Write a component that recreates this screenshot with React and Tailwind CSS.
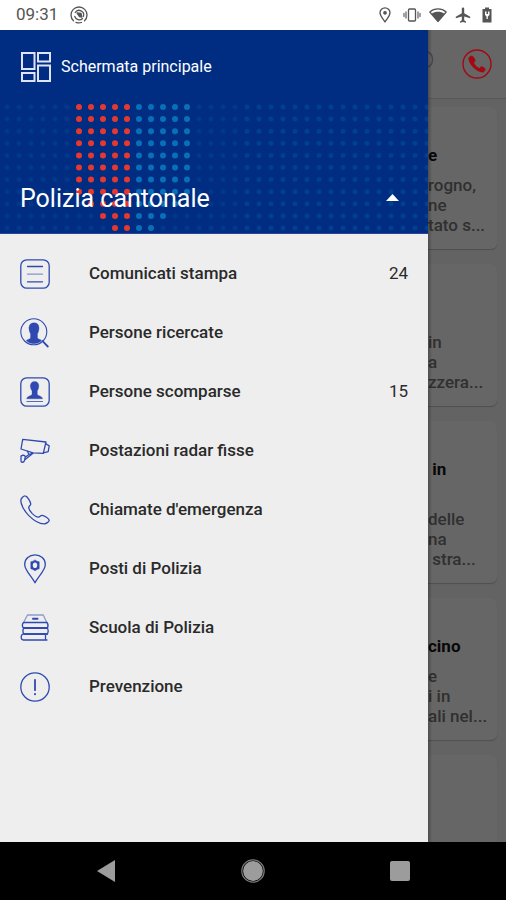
import React from "react";

const stroke = {
  fill: "none",
  stroke: "currentColor",
  strokeWidth: 1.3,
  strokeLinecap: "round",
  strokeLinejoin: "round",
};

function MenuIcon({ children }) {
  return (
    <svg viewBox="0 0 30 30" className="size-[30px] shrink-0 text-[#2f49b0]" aria-hidden="true" {...stroke}>
      {children}
    </svg>
  );
}

const items = [
  {
    label: "Comunicati stampa",
    count: 24,
    icon: (
      <>
        <rect x="0.8" y="0.8" width="28.4" height="28.4" rx="6" />
        <path d="M7.5 7.5h15M7.5 22.8h15" />
        <path d="M7.5 15.2h15" opacity="0.55" />
      </>
    ),
  },
  {
    label: "Persone ricercate",
    icon: (
      <>
        <circle cx="13.8" cy="13.8" r="13" strokeWidth="1.1" />
        <path
          d="M9 9.800C9 6.500 11 4.800 14 4.800s5 1.700 5 5c0 2.600-.6 4.500-1.500 5.900v4.300c.6 1 3 1.300 4.200 2.400-4.500 4.300-11.300 4.300-15.400 0 1.200-1.100 3.600-1.400 4.200-2.400v-4.300C9.600 14.300 9 12.400 9 9.800z"
          fill="currentColor"
          strokeWidth="0.3"
        />
        <path d="M22.600 23.200l5.200 5.300" strokeWidth="1.800" />
      </>
    ),
  },
  {
    label: "Persone scomparse",
    count: 15,
    icon: (
      <>
        <rect x="0.8" y="0.8" width="28.4" height="28.4" rx="6" />
        <path
          d="M10.400 8.800C10.400 6 12 4.400 14.600 4.400s4.200 1.600 4.200 4.400c0 2-.5 3.600-1.500 5v3.600c1.200 1.600 5 1.600 5.400 4.400H6.600c.4-2.800 4.200-2.800 5.400-4.400v-3.600c-1.100-1.400-1.600-3-1.600-5z"
          fill="currentColor"
          strokeWidth="0.300"
        />
        <path d="M7 24.500h15.500" strokeWidth="1.200" opacity="0.800" />
      </>
    ),
  },
  {
    label: "Postazioni radar fisse",
    icon: (
      <>
        <path d="M2.700 3.300L26 6 23.300 17.400 13 16.800 1 13z" />
        <path d="M25.500 7.500l3.700 2.400-1 5.800-4.700 1.200" />
        <path d="M7.500 15.500l1.500 3 4-1.300M9 18.500L5.500 21M13 17.300l-7.500 6" />
        <path d="M1 20c2.500-1.500 4.500-.5 4.200 1.500l-.8 3.200c-.7 2-3.200 2-3.400.4z" />
      </>
    ),
  },
  {
    label: "Chiamate d'emergenza",
    icon: (
      <path d="M5.300.9C3.700.6.900 3.500.8 5.400c-.1 3.500 3 10.200 8 15.200 5 4.900 11.500 8.400 15.400 8.300 2 0 4.800-2.200 5-3.600.2-1.300-5.200-5-7.200-4.900-1.500.1-2.200 1.600-3.400 1.700-1.700.1-4.300-1.500-6.300-3.500-2.100-2.200-3.700-4.800-3.500-6.400.1-1.100 1.800-1.800 1.900-3C10.900 7.200 7.300 1.200 5.300.9z" />
    ),
  },
  {
    label: "Posti di Polizia",
    icon: (
      <>
        <path d="M15 28.800C11.800 22.500 4.700 16.500 4.700 10.500 4.700 4.900 9.300.9 15 .9s10.300 4 10.300 9.600c0 6-7.100 12-10.300 18.300z" />
        <path d="M15 6l2 1.300 2.200.5v6.900l-2 .7-2.200 1.300-2.200-1.300-2-.7V7.800l2.200-.5z" fill="currentColor" strokeWidth="0.500" />
        <ellipse cx="15" cy="11.300" rx="2.200" ry="2.800" fill="#eeeeee" stroke="none" />
      </>
    ),
  },
  {
    label: "Scuola di Polizia",
    icon: (
      <>
        <path d="M3.800 9L7.500 2h15.800L26.500 9" opacity="0.500" />
        <path d="M13 5.700h4.500" strokeWidth="2" />
        <path d="M27 9.500H4.200c-2.400 0-2.400 5.500 0 5.500h23.300c.8-1.800.8-3.700-.5-5.500z" />
        <path d="M27.500 15H4.800c-2.500 0-2.500 6 0 6h22.700c1-2 1-4 0-6z" />
        <path d="M26 21.200H3.300c-2.800 0-2.800 5.800 0 5.800H27M25.500 21.200V27" />
        <path d="M5 14.800h22M5 21h22" strokeWidth="1.700" />
      </>
    ),
  },
  {
    label: "Prevenzione",
    icon: (
      <>
        <circle cx="15" cy="15" r="14.2" />
        <path d="M15 7.800v10.400" strokeWidth="1.800" />
        <path d="M15 21.900v.3" strokeWidth="2" />
      </>
    ),
  },
];

const cards = [
  { title: ["e"], lines: ["rogno,", "ne", "tato s..."] },
  { title: ["\u00a0"], lines: ["in", "a", "zzera..."] },
  { title: ["\u00a0in", "\u00a0"], lines: ["delle", "na", "\u00a0stra..."] },
  { title: ["cino"], lines: ["e", "i in", "ali nel..."] },
  { title: ["\u00a0"], lines: ["\u00a0", "\u00a0", "\u00a0"] },
];

function dotColor(col, row) {
  const inset = Math.max(0, row - 7);
  if (col >= 6 + inset && col <= 10) return "#e5382f";
  if (col >= 11 && col <= 15 - inset) return "#0870b8";
  return "#005099";
}

function DotField() {
  const dots = [];
  for (let row = 0; row < 11; row++) {
    for (let col = 0; col < 60; col++) {
      const fill = dotColor(col, row);
      const faint = fill === "#005099";
      dots.push(
        <circle
          key={`${row}-${col}`}
          cx={7 + col * 12}
          cy={5 + row * 12.1}
          r={faint ? 2.5 : 3}
          fill={fill}
          opacity={faint ? (col < 20 ? 0.35 : 0.55) : 1}
        />
      );
    }
  }
  return (
    <svg className="absolute bottom-0 left-0 h-[131px] w-full" aria-hidden="true">
      {dots}
    </svg>
  );
}

function StatusBar() {
  return (
    <header className="flex h-[30px] shrink-0 items-center justify-between bg-white pr-[13px] pl-4 text-[#555555]">
      <div className="flex items-center gap-3">
        <time className="text-[17px]">09:31</time>
        <svg viewBox="0 0 18 18" className="size-[18px]" aria-hidden="true" {...stroke}>
          <path d="M3.5 14.8A8 8 0 1 1 14.5 14.8M6 16.4a8 8 0 0 0 5.5.1" />
          <path d="M4.800 10.500a4.600 4.600 0 0 0 7.700 2M5.200 6.500a4.600 4.600 0 0 1 8.200 4" />
          <path d="M7 7l4 .5.8 3.500-2.500-.5z" fill="currentColor" />
        </svg>
      </div>
      <div className="flex items-center gap-2">
        <svg viewBox="0 0 12 16" className="mr-1 h-4 w-3" aria-hidden="true" {...stroke}>
          <path d="M6 15C4 11.500 1 9 1 5.800a5 5 0 0 1 10 0C11 9 8 11.500 6 15z" />
          <circle cx="6" cy="5.800" r="1.200" fill="currentColor" />
        </svg>
        <svg viewBox="0 0 18 14" className="h-[14px] w-[18px]" aria-hidden="true" {...stroke}>
          <rect x="5.5" y="1" width="7" height="12" rx="1" />
          <path d="M3 4v6M15 4v6M1 5.500v3M17 5.500v3" strokeWidth="1.600" opacity="0.700" />
        </svg>
        <svg viewBox="0 0 18 14" className="h-[14px] w-[18px]" aria-hidden="true">
          <path d="M.8 4C5.500-.1 12.500-.1 17.200 4L9 13.500z" {...stroke} strokeWidth="1.200" />
          <path d="M2.500 5.700c4-2.500 9-2.500 13 0L9 13.500z" fill="currentColor" />
        </svg>
        <svg viewBox="0 0 16 16" className="size-4" aria-hidden="true">
          <path d="M8 .5c-.8 0-1.200.6-1.200 1.300v4.400L.8 9.800v1.500l6-1.800v3.800L5 14.500v1.200l3-.8 3 .8v-1.200l-1.800-1.200V9.500l6 1.800V9.800l-6-3.600V1.800C9.200 1.100 8.800.5 8 .5z" fill="currentColor" />
        </svg>
        <svg viewBox="0 0 12 16" className="ml-[2px] h-4 w-3" aria-hidden="true">
          <path d="M4 .5h4V2h2.500v13.500h-9V2H4z" fill="currentColor" />
          <path d="M4 4.500h1.500V7h1.500V4.500h1.500V8L6.800 9.500V12H5.500V9.500L4 8z" fill="#ffffff" />
        </svg>
      </div>
    </header>
  );
}

function Drawer() {
  return (
    <aside className="flex min-w-0 flex-1 flex-col bg-[#eeeeee]">
      <div className="relative flex h-[204px] shrink-0 flex-col justify-between border-b border-[#29429a] bg-[#002d81] text-white">
        <DotField />
        <a href="#home" className="relative mt-[21px] ml-[21px] flex items-center gap-[10px] self-start text-base leading-8">
          <svg viewBox="0 0 30 30" className="size-[30px]" fill="none" stroke="#dfe3f8" strokeWidth="2" aria-hidden="true">
            <rect x="1" y="1" width="12.5" height="16" />
            <rect x="17" y="1" width="12" height="8.5" />
            <rect x="1" y="21" width="12.5" height="8" />
            <rect x="17" y="13.5" width="12" height="15.5" />
          </svg>
          Schermata principale
        </a>
        <button type="button" aria-expanded="true" className="relative mb-[18px] flex items-center justify-between pr-[29px] pl-5 text-left text-[25px] leading-8">
          Polizia cantonale
          <svg viewBox="0 0 13 7" className="mb-1 h-[7px] w-[13px]" fill="white" aria-hidden="true">
            <path d="M6.5 0L13 7H0z" />
          </svg>
        </button>
      </div>
      <nav className="pt-[10px]">
        <ul>
          {items.map((item) => (
            <li key={item.label}>
              <a href="#menu" className="flex h-[59px] items-center px-5 text-[17px] font-medium text-[#2a2a2a]">
                <MenuIcon>{item.icon}</MenuIcon>
                <span className="ml-[39px] flex-1">{item.label}</span>
                {item.count && <span className="font-normal">{item.count}</span>}
              </a>
            </li>
          ))}
        </ul>
      </nav>
    </aside>
  );
}

function DimmedPage() {
  return (
    <main className="relative flex w-[78px] shrink-0 flex-col overflow-hidden bg-[#636363]">
      <div className="flex h-[69px] shrink-0 items-center justify-between border-b border-[#575757] bg-[#666666] pr-[14px]">
        <svg viewBox="0 0 6 20" className="mb-2 h-5 w-[6px]" fill="none" stroke="#4f3f58" strokeWidth="1.5" aria-hidden="true">
          <path d="M0 2a8.500 8.500 0 0 1 0 15" />
        </svg>
        <button type="button" aria-label="Chiamata d'emergenza" className="text-[#a40812]">
          <svg viewBox="0 0 30 30" className="size-[30px]" aria-hidden="true">
            <circle cx="15" cy="15" r="14" fill="none" stroke="currentColor" strokeWidth="1.4" />
            <path d="M9.500 6.500L6.500 8.500c-.5 3 1.500 7 5 10.300 3.400 3.300 7.500 5.200 10.300 4.500l1.900-3c.2-.7-3.500-3.300-4.500-3l-1.800 1.700c-2-.6-4.800-3.300-5.400-5.300l1.500-2c.3-1-2.500-5.300-4-5.200z" fill="currentColor" />
          </svg>
        </button>
      </div>
      <div className="flex flex-col gap-[15px] pt-2 pr-[9px]">
        {cards.map((card, i) => (
          <article key={i} className="rounded-r-md bg-[#666666] pt-[38px] pb-[14px] text-[17px] leading-5 whitespace-nowrap shadow-[0_1px_1px_0px_#4f4f4f]">
            <h2 className="mb-[10px] font-bold text-[#080808]">
              {card.title.map((line, n) => (
                <span key={n} className="block">{line}</span>
              ))}
            </h2>
            {card.lines.map((line, n) => (
              <p key={n} className="font-medium text-[#303030]">{line}</p>
            ))}
          </article>
        ))}
      </div>
      <div className="absolute inset-y-0 left-0 w-1 bg-linear-to-r from-black/25 to-transparent" />
    </main>
  );
}

function NavigationBar() {
  return (
    <footer className="grid h-[58px] shrink-0 grid-cols-3 items-center justify-items-center bg-black px-8">
      <button type="button" aria-label="Indietro">
        <svg viewBox="0 0 18 22" className="h-[22px] w-[18px]" fill="#9c9c9c" aria-hidden="true">
          <path d="M18 0v22L0 11z" />
        </svg>
      </button>
      <button type="button" aria-label="Home">
        <svg viewBox="0 0 24 24" className="size-6" aria-hidden="true">
          <circle cx="12" cy="12" r="11.2" fill="none" stroke="#7c7c7c" strokeWidth="1.2" />
          <circle cx="12" cy="12" r="9.900" fill="#9c9c9c" />
        </svg>
      </button>
      <button type="button" aria-label="App recenti">
        <span className="block size-5 rounded-[2px] bg-[#9c9c9c]" />
      </button>
    </footer>
  );
}

export default function App() {
  return (
    <div className="flex h-screen flex-col overflow-hidden font-[Roboto,sans-serif]">
      <StatusBar />
      <div className="flex min-h-0 flex-1">
        <Drawer />
        <DimmedPage />
      </div>
      <NavigationBar />
    </div>
  );
}
